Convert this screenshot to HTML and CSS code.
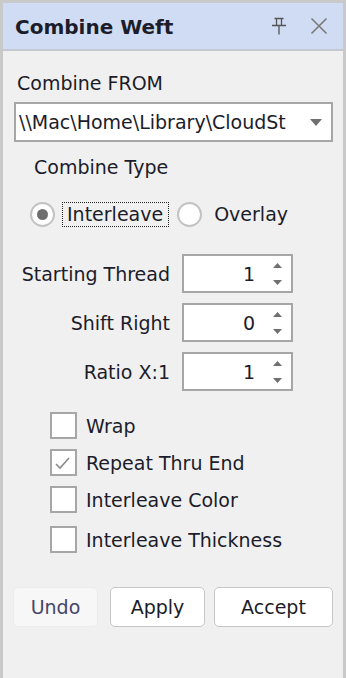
FILE: index.html
```html
<!DOCTYPE html>
<html lang="en">
<head>
  <meta charset="UTF-8" />
  <title>Combine Weft</title>
  <link rel="stylesheet" href="styles.css">
</head>
<body>
  <div class="panel">
    <div class="titlebar">
      <span class="title">Combine Weft</span>
      <svg class="pin" width="16" height="18" viewBox="0 0 16 18">
        <path d="M3.5 1.5h9M5.5 1.5v7M10.5 1.5v7M1 8.5h14M8 8.5v9" stroke="#555" stroke-width="1.3" fill="none"/>
      </svg>
      <svg class="close" width="18" height="18" viewBox="0 0 18 18">
        <path d="M1.5 1.5l15 15M16.5 1.5l-15 15" stroke="#7a7a7a" stroke-width="1.6" fill="none"/>
      </svg>
    </div>

    <div class="content">
      <div class="label from-label">Combine FROM</div>
      <div class="select">
        <span class="select-text">\\Mac\Home\Library\CloudSt</span>
        <svg class="select-arrow" width="12" height="7" viewBox="0 0 12 7">
          <path d="M0 0h12L6 7z" fill="#707070"/>
        </svg>
      </div>

      <div class="label type-label">Combine Type</div>
      <div class="radios">
        <span class="radio on"></span>
        <span class="radio-text focused">Interleave</span>
        <span class="radio"></span>
        <span class="radio-text">Overlay</span>
      </div>

      <div class="spins">
        <span class="spin-label">Starting Thread</span>
        <div class="spin">
          <span class="spin-val">1</span>
          <svg class="spin-arrows" width="11" height="22" viewBox="0 0 11 22"><path d="M5.5 0L10 5H1z M1 17h9l-4.5 5z" fill="#707070"/></svg>
        </div>
        <span class="spin-label">Shift Right</span>
        <div class="spin">
          <span class="spin-val">0</span>
          <svg class="spin-arrows" width="11" height="22" viewBox="0 0 11 22"><path d="M5.5 0L10 5H1z M1 17h9l-4.5 5z" fill="#707070"/></svg>
        </div>
        <span class="spin-label">Ratio X:1</span>
        <div class="spin">
          <span class="spin-val">1</span>
          <svg class="spin-arrows" width="11" height="22" viewBox="0 0 11 22"><path d="M5.5 0L10 5H1z M1 17h9l-4.5 5z" fill="#707070"/></svg>
        </div>
      </div>

      <div class="checks">
        <div class="check-row"><span class="box"></span>Wrap</div>
        <div class="check-row">
          <span class="box">
            <svg width="23" height="23" viewBox="0 0 23 23"><path d="M4 13l4 4 9-10" stroke="#8a8a8a" stroke-width="1.6" fill="none"/></svg>
          </span>Repeat Thru End
        </div>
        <div class="check-row"><span class="box"></span>Interleave Color</div>
        <div class="check-row last"><span class="box"></span>Interleave Thickness</div>
      </div>

      <div class="buttons">
        <button class="btn undo">Undo</button>
        <button class="btn apply">Apply</button>
        <button class="btn accept">Accept</button>
      </div>
    </div>
  </div>
</body>
</html>
```

FILE: styles.css
```css
body {
  margin: 0;
  font-family: "DejaVu Sans", sans-serif;
  font-size: 19px;
  color: #1c1c2a;
  background: #f0f0f0;
}
.panel {
  box-sizing: border-box;
  width: 346px;
  height: 678px;
  border: 3px solid #c9c9c9;
  border-bottom: none;
  background: #f0f0f0;
}
.titlebar {
  height: 46px;
  background: #cfdcf3;
  border-bottom: 2px solid #c4c9d1;
  display: flex;
  align-items: center;
  padding-left: 12px;
}
.title {
  font-weight: bold;
  font-size: 20px;
  flex: 1;
  padding-top: 2px;
}
.pin {
  margin-right: 23px;
}
.close {
  margin-right: 15px;
}
.content {
  padding: 0 10px 0 11px;
  display: flex;
  flex-direction: column;
}
.label {
  line-height: 22px;
}
.from-label {
  margin: 21px 0 0 3px;
}
.select {
  box-sizing: border-box;
  height: 40px;
  margin-top: 8px;
  background: #fff;
  border: 2px solid #a6a6a6;
  display: flex;
  align-items: center;
  padding-left: 3px;
}
.select-text {
  flex: 1;
  white-space: nowrap;
}
.select-arrow {
  margin-right: 9px;
}
.type-label {
  margin: 14px 0 0 20px;
}
.radios {
  display: flex;
  align-items: center;
  margin: 23px 0 0 16px;
  height: 26px;
}
.radio {
  box-sizing: border-box;
  width: 25px;
  height: 25px;
  border-radius: 50%;
  border: 2px solid #c2c2c2;
  background: #fff;
  display: flex;
  align-items: center;
  justify-content: center;
}
.radio.on::after {
  content: "";
  width: 11px;
  height: 11px;
  border-radius: 50%;
  background: #6e6e6e;
}
.radio-text {
  margin: 0 8px 0 7px;
  line-height: 23px;
  padding: 0 5px 0 4px;
  border: 1px solid transparent;
}
.radio-text.focused {
  border: 1px dotted #222;
}
.spins {
  display: grid;
  grid-template-columns: 156px 111px;
  column-gap: 12px;
  row-gap: 10px;
  align-items: center;
  margin-top: 27px;
}
.spin-label {
  text-align: right;
}
.spin {
  box-sizing: border-box;
  height: 39px;
  background: #fff;
  border: 2px solid #a6a6a6;
  display: flex;
  align-items: center;
  justify-content: flex-end;
  padding-right: 8px;
}
.spin-val {
  margin-right: 17px;
}
.checks {
  margin: 21px 0 0 36px;
  display: flex;
  flex-direction: column;
  gap: 10px;
}
.check-row {
  display: flex;
  align-items: center;
  height: 27px;
}
.check-row.last {
  margin-top: 3px;
}
.box {
  box-sizing: border-box;
  width: 27px;
  height: 27px;
  border: 2px solid #a6a6a6;
  background: #fff;
  margin-right: 9px;
  display: flex;
}
.buttons {
  display: flex;
  margin: 34px 0 0 -1px;
}
.btn {
  box-sizing: border-box;
  height: 40px;
  font-family: "DejaVu Sans", sans-serif;
  font-size: 19px;
  color: #1c1c2a;
  background: #fff;
  border: 1.5px solid #c6c6c6;
  border-radius: 5px;
  padding: 0;
}
.undo {
  width: 85px;
  background: #f7f7f7;
  border-color: #ececec;
  color: #45456a;
}
.apply {
  width: 95px;
  margin-left: 12px;
}
.accept {
  width: 119px;
  margin-left: 9px;
}
```
